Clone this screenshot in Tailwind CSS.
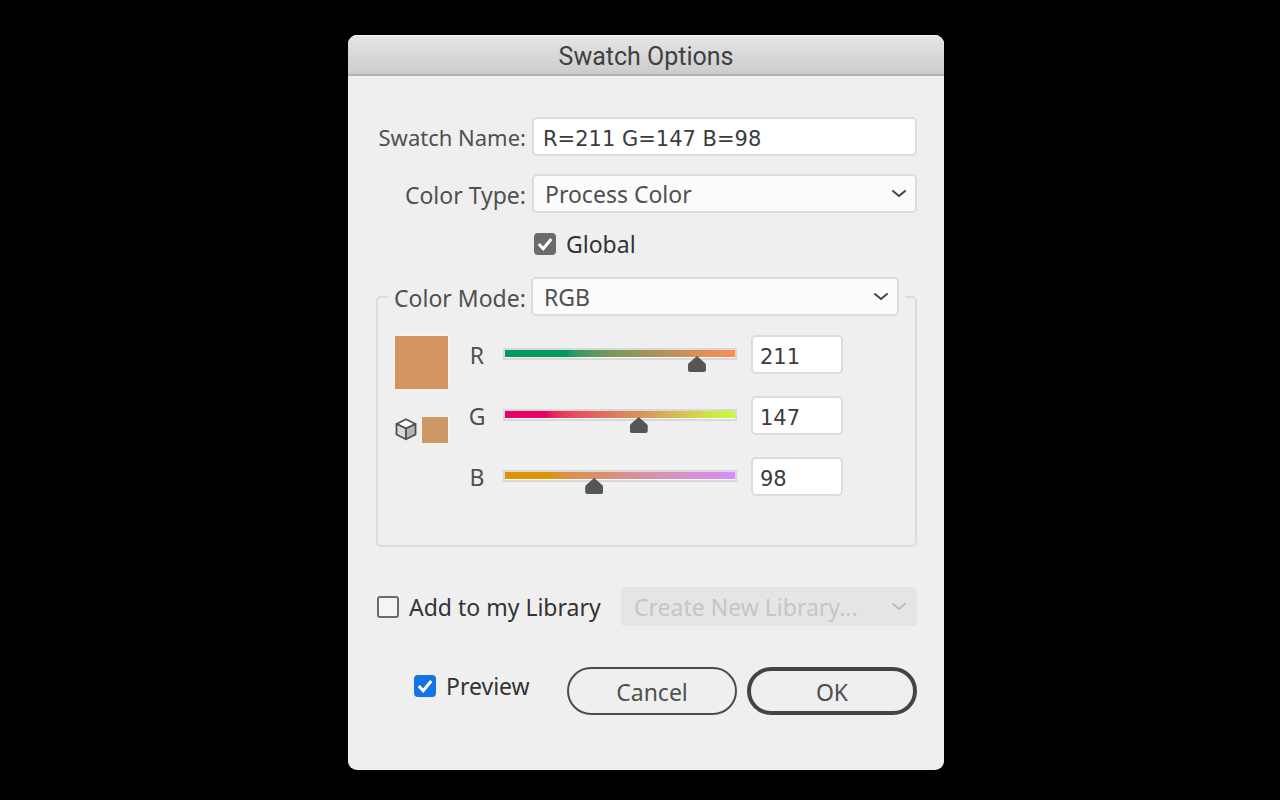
<!DOCTYPE html>
<html lang="en">
<head>
<meta charset="utf-8">
<meta name="viewport" content="width=device-width, initial-scale=1">
<title>Swatch Options</title>
<script src="https://cdn.jsdelivr.net/npm/@tailwindcss/browser@4"></script>
</head>
<body class="min-h-screen bg-black pt-[35px] pl-3 font-['Noto_Sans',sans-serif] text-[23px] leading-8 text-[#505050]">
<main class="mx-auto w-full max-w-[596px] overflow-hidden rounded-[9px] bg-[#efefef]">
  <header class="border-b-2 border-[#b4b4b4] bg-linear-to-b from-[#e6e6e6] to-[#cccccc] shadow-[inset_0_1px_0_#f5f5f5]">
    <h1 class="pt-[6px] pb-px text-center font-[Roboto,sans-serif] text-[25px] leading-8 text-[#404040]">Swatch Options</h1>
  </header>

  <form class="pt-[41px] pr-[27px] pb-[55px] pl-7">
    <div class="flex items-center">
      <label for="name" class="w-[150px] shrink-0 text-right text-[22px] whitespace-nowrap">Swatch Name:</label>
      <input id="name" type="text" value="R=211 G=147 B=98" class="ml-[6px] h-[39px] min-w-0 flex-1 rounded-[5px] border-2 border-[#dcdcdc] bg-white px-[9px] pt-[5px] font-['DejaVu_Sans',sans-serif] text-[21px] text-[#3c3c3c]">
    </div>

    <div class="mt-[18px] flex items-center">
      <label for="type" class="w-[150px] shrink-0 pt-[2px] text-right whitespace-nowrap">Color Type:</label>
      <div class="ml-[6px] grid min-w-0 flex-1 items-center">
        <select id="type" class="col-start-1 row-start-1 h-[39px] w-full appearance-none rounded-[5px] border-2 border-[#dcdcdc] bg-[#fbfbfb] px-[11px]"><option>Process Color</option><option>Spot Color</option></select>
        <svg class="pointer-events-none col-start-1 row-start-1 mr-[10px] justify-self-end" width="16" height="10" viewBox="0 0 16 10" fill="none" stroke="#444" stroke-width="2" stroke-linecap="round" stroke-linejoin="round" aria-hidden="true"><path d="M2 2l6 5 6-5"/></svg>
      </div>
    </div>

    <label class="mt-[15px] ml-[158px] flex w-fit items-center gap-[10px] text-[#333]">
      <span class="grid size-[22px]">
        <input type="checkbox" checked class="col-start-1 row-start-1 size-[22px] appearance-none rounded-[4px] border-2 border-[#6b6b6b] checked:bg-[#6b6b6b]">
        <svg class="pointer-events-none col-start-1 row-start-1" width="22" height="22" viewBox="0 0 22 22" fill="none" stroke="#fff" stroke-width="3" stroke-linecap="butt" stroke-linejoin="miter" aria-hidden="true"><path d="M4.800 11l4.400 4.800L17.300 6"/></svg>
      </span>
      Global
    </label>

    <fieldset class="mt-[17px] rounded-[5px] border-2 border-[#dcdcdc] pr-[10px] pb-[49px] pl-[10px]">
      <legend class="flex w-full items-center px-[6px]">
        <label for="mode" class="w-[131px] shrink-0 pt-[2px] text-right whitespace-nowrap">Color Mode:</label>
        <div class="ml-[6px] grid min-w-0 flex-1 items-center">
          <select id="mode" class="col-start-1 row-start-1 h-[39px] w-full appearance-none rounded-[5px] border-2 border-[#dcdcdc] bg-[#fbfbfb] px-[11px]"><option>RGB</option><option>CMYK</option></select>
          <svg class="pointer-events-none col-start-1 row-start-1 mr-[10px] justify-self-end" width="16" height="10" viewBox="0 0 16 10" fill="none" stroke="#444" stroke-width="2" stroke-linecap="round" stroke-linejoin="round" aria-hidden="true"><path d="M2 2l6 5 6-5"/></svg>
        </div>
      </legend>

      <div class="flex pt-[19px] pr-[62px] pl-[6px]">
        <div class="w-[55px] shrink-0">
          <div class="size-[55px] border border-[#f8f3ec] bg-[#d39362]"></div>
          <div class="mt-[26px] flex items-center justify-between">
            <svg width="24" height="24" viewBox="0 0 24 24" stroke="#505050" stroke-width="1.800" stroke-linejoin="round" aria-hidden="true"><path d="M12 1.200L21.500 6 12 10.500 2.500 6z" fill="#fafafa"/><path d="M2.500 6L12 10.500V21.300L2.500 16.500z" fill="#dadada"/><path d="M21.500 6L12 10.500V21.300L21.500 16.500z" fill="#b5b5b5"/></svg>
            <div class="size-7 border border-[#f8f3ec] bg-[#cc9966]"></div>
          </div>
        </div>

        <div class="ml-4 flex min-w-0 flex-1 flex-col gap-[22px]">
          <div class="flex items-center">
            <label for="r" class="w-6 pt-px text-center">R</label>
            <div class="mr-[5px] ml-[7px] grid h-[39px] min-w-0 flex-1">
              <div class="col-start-1 row-start-1 mr-[9px] ml-[7px] mt-[13px] h-3 border-2 border-[#d8d8d8] bg-white"><div class="h-[7px] bg-linear-to-r from-[#009a5f] from-27% via-[#be9157] via-73% to-[#ff8b55]"></div></div>
              <input id="r" type="range" min="0" max="255" value="211" class="col-start-1 row-start-1 mt-[21px] h-4 w-full appearance-none bg-transparent [&::-webkit-slider-thumb]:h-4 [&::-webkit-slider-thumb]:w-[18px] [&::-webkit-slider-thumb]:appearance-none [&::-webkit-slider-thumb]:bg-[#555] [&::-webkit-slider-thumb]:[clip-path:path('M9_0L17_7Q18_8_18_9V14Q18_16_16_16H2Q0_16_0_14V9Q0_8_1_7Z')]">
            </div>
            <input type="text" inputmode="numeric" aria-label="R value" value="211" class="h-[39px] w-[92px] rounded-[5px] border-2 border-[#dcdcdc] bg-white px-[7px] pt-[4px] font-['DejaVu_Sans',sans-serif] text-[21px] text-[#3c3c3c]">
          </div>
          <div class="flex items-center">
            <label for="g" class="w-6 pt-px text-center">G</label>
            <div class="mr-[5px] ml-[7px] grid h-[39px] min-w-0 flex-1">
              <div class="col-start-1 row-start-1 mr-[9px] ml-[7px] mt-[13px] h-3 border-2 border-[#d8d8d8] bg-white"><div class="h-[7px] bg-linear-to-r from-[#e80062] from-18% via-[#d99058] via-58% to-[#c5ff35]"></div></div>
              <input id="g" type="range" min="0" max="255" value="147" class="col-start-1 row-start-1 mt-[21px] h-4 w-full appearance-none bg-transparent [&::-webkit-slider-thumb]:h-4 [&::-webkit-slider-thumb]:w-[18px] [&::-webkit-slider-thumb]:appearance-none [&::-webkit-slider-thumb]:bg-[#555] [&::-webkit-slider-thumb]:[clip-path:path('M9_0L17_7Q18_8_18_9V14Q18_16_16_16H2Q0_16_0_14V9Q0_8_1_7Z')]">
            </div>
            <input type="text" inputmode="numeric" aria-label="G value" value="147" class="h-[39px] w-[92px] rounded-[5px] border-2 border-[#dcdcdc] bg-white px-[7px] pt-[4px] font-['DejaVu_Sans',sans-serif] text-[21px] text-[#3c3c3c]">
          </div>
          <div class="flex items-center">
            <label for="b" class="w-6 pt-px text-center">B</label>
            <div class="mr-[5px] ml-[7px] grid h-[39px] min-w-0 flex-1">
              <div class="col-start-1 row-start-1 mr-[9px] ml-[7px] mt-[13px] h-3 border-2 border-[#d8d8d8] bg-white"><div class="h-[7px] bg-linear-to-r from-[#df9300] from-19% via-[#db8e66] via-39% to-[#d78bff]"></div></div>
              <input id="b" type="range" min="0" max="255" value="98" class="col-start-1 row-start-1 mt-[21px] h-4 w-full appearance-none bg-transparent [&::-webkit-slider-thumb]:h-4 [&::-webkit-slider-thumb]:w-[18px] [&::-webkit-slider-thumb]:appearance-none [&::-webkit-slider-thumb]:bg-[#555] [&::-webkit-slider-thumb]:[clip-path:path('M9_0L17_7Q18_8_18_9V14Q18_16_16_16H2Q0_16_0_14V9Q0_8_1_7Z')]">
            </div>
            <input type="text" inputmode="numeric" aria-label="B value" value="98" class="h-[39px] w-[92px] rounded-[5px] border-2 border-[#dcdcdc] bg-white px-[7px] pt-[4px] font-['DejaVu_Sans',sans-serif] text-[21px] text-[#3c3c3c]">
          </div>
        </div>
      </div>
    </fieldset>

    <div class="mt-10 flex items-center justify-between">
      <label class="ml-px flex items-center gap-[10px] whitespace-nowrap text-[#333]">
        <input type="checkbox" class="size-[22px] appearance-none rounded-[3px] border-2 border-[#6b6b6b] bg-[#f4f4f4] checked:bg-[#6b6b6b]">
        Add to my Library
      </label>
      <div class="grid w-[296px] items-center">
        <select disabled aria-label="Library" class="col-start-1 row-start-1 h-[39px] w-full appearance-none rounded-[4px] bg-[#e5e5e5] px-[13px] text-[#c6c6c6] opacity-100"><option>Create New Library...</option></select>
        <svg class="pointer-events-none col-start-1 row-start-1 mr-[10px] justify-self-end" width="16" height="10" viewBox="0 0 16 10" fill="none" stroke="#bdbdbd" stroke-width="2" stroke-linecap="round" stroke-linejoin="round" aria-hidden="true"><path d="M2 2l6 5 6-5"/></svg>
      </div>
    </div>

    <div class="mt-[41px] flex items-center justify-end gap-[10px]">
      <label class="mr-auto ml-[38px] flex items-center gap-[10px] pb-[10px] text-[#333]">
        <span class="grid size-[22px]">
          <input type="checkbox" checked class="col-start-1 row-start-1 size-[22px] appearance-none rounded-[4px] border-2 border-[#1473e6] checked:bg-[#1473e6]">
          <svg class="pointer-events-none col-start-1 row-start-1" width="22" height="22" viewBox="0 0 22 22" fill="none" stroke="#fff" stroke-width="3" stroke-linecap="butt" stroke-linejoin="miter" aria-hidden="true"><path d="M4.800 11l4.400 4.800L17.300 6"/></svg>
        </span>
        Preview
      </label>
      <button type="button" class="h-12 w-[170px] rounded-full border-2 border-[#4b4b4b] pt-[2px]">Cancel</button>
      <button type="submit" class="h-12 w-[170px] rounded-full border-4 border-[#444] pt-[2px]">OK</button>
    </div>
  </form>
</main>
</body>
</html>
